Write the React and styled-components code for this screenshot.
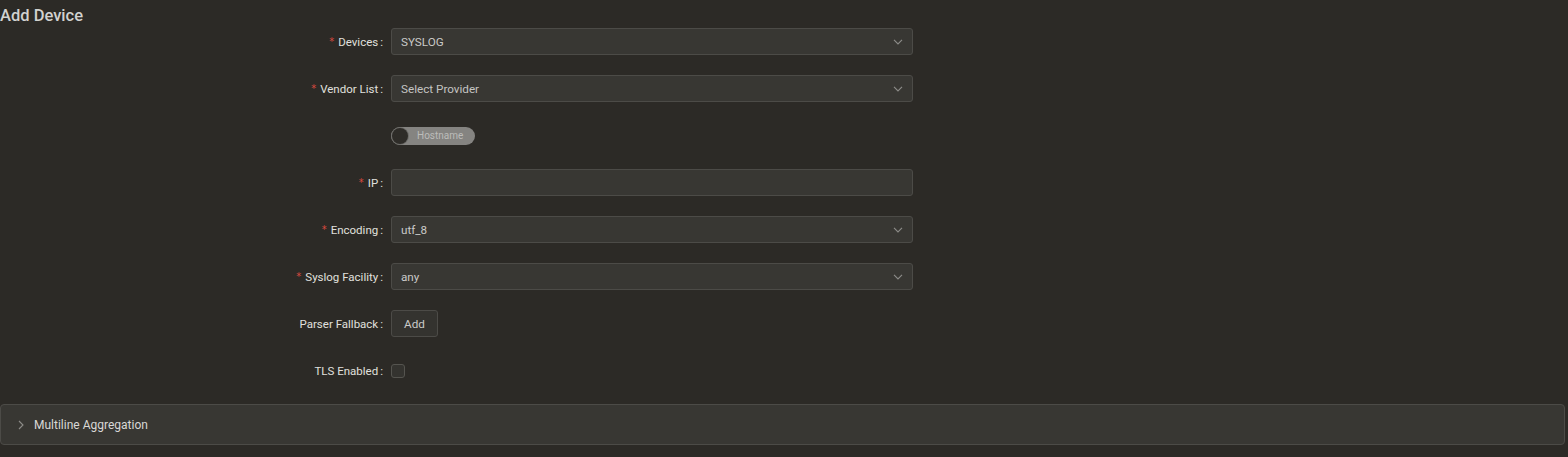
import React, { useState } from "react";
import styled, { createGlobalStyle } from "styled-components";

const GlobalStyle = createGlobalStyle`
  html, body { margin: 0; padding: 0; }
  body {
    background: #2c2a26;
    font-family: Roboto, "Liberation Sans", Arial, sans-serif;
    color: #dedede;
  }
  * { box-sizing: border-box; }
`;

const Page = styled.div`
  width: 1568px;
  min-height: 457px;
  background: #2c2a26;
`;

const Title = styled.h2`
  margin: 0;
  padding-top: 4px;
  height: 28px;
  font-size: 16.5px;
  line-height: 24px;
  font-weight: 500;
  color: #d2d2d0;
`;

const Form = styled.form`
  display: flex;
  flex-direction: column;
  gap: 20px;
`;

const Row = styled.div`
  display: grid;
  grid-template-columns: 391px 522px;
  align-items: center;
  height: 27px;
`;

const Label = styled.label`
  display: flex;
  justify-content: flex-end;
  align-items: center;
  padding-right: 8px;
  font-size: 11.5px;
  color: #e0e0de;
  white-space: nowrap;
  &::after {
    content: ":";
    margin-left: 2px;
  }
`;

const Required = styled.span`
  color: #d9493f;
  font-size: 10px;
  margin-right: 4px;
  font-family: SimSun, "DejaVu Sans", sans-serif;
  line-height: 1;
`;

const SelectBox = styled.div`
  height: 27px;
  display: flex;
  align-items: center;
  justify-content: space-between;
  padding: 0 9px 0 9px;
  background: #383733;
  border: 1px solid #4c4b47;
  border-radius: 3px;
  font-size: 11.7px;
  color: ${(p) => (p.$placeholder ? "#c4c4c2" : "#cacac8")};
`;

const TextInput = styled.input`
  height: 27px;
  width: 100%;
  padding: 0 9px;
  background: #383733;
  border: 1px solid #4c4b47;
  border-radius: 3px;
  font-size: 11.7px;
  font-family: inherit;
  color: #cacac8;
  outline: none;
`;

const SwitchTrack = styled.button`
  position: relative;
  width: 84px;
  height: 18px;
  border: none;
  border-radius: 9px;
  background: #858481;
  padding: 0 0 0 26px;
  display: flex;
  align-items: center;
  font-family: inherit;
  font-size: 10px;
  color: #bcbcba;
  cursor: pointer;
`;

const SwitchHandle = styled.span`
  position: absolute;
  left: 1px;
  top: 1px;
  width: 16px;
  height: 16px;
  border-radius: 50%;
  background: #2e2c28;
  box-shadow: 0 0 0 1px #6e6d6a;
`;

const Button = styled.button`
  width: 47px;
  height: 27px;
  background: #34332f;
  border: 1px solid #4c4b47;
  border-radius: 3px;
  font-family: inherit;
  font-size: 11.7px;
  color: #cacac8;
  padding: 0;
`;

const Checkbox = styled.span`
  display: block;
  width: 14px;
  height: 14px;
  border: 1px solid #55544f;
  border-radius: 3px;
  background: #34332f;
`;

const Collapse = styled.div`
  margin-top: 20px;
  margin-right: 3px;
  height: 41px;
  background: #383733;
  border: 1px solid #4c4b47;
  border-radius: 4px;
  display: flex;
  align-items: center;
  padding: 1px 0 0 16px;
  gap: 9px;
  font-size: 12px;
  color: #d8d8d6;
`;

const Chevron = ({ dir = "down" }) =>
  dir === "down" ? (
    <svg width="10" height="6" viewBox="0 0 10 6" fill="none">
      <path d="M1 0.8 L5 5 L9 0.8" stroke="#8d8c89" strokeWidth="1.1" />
    </svg>
  ) : (
    <svg width="8" height="10" viewBox="0 0 8 10" fill="none">
      <path d="M2 1 L6 5 L2 9" stroke="#8d8c89" strokeWidth="1.1" />
    </svg>
  );

const Select = ({ value, placeholder }) => (
  <SelectBox $placeholder={placeholder}>
    <span>{value}</span>
    <Chevron />
  </SelectBox>
);

const FieldLabel = ({ required, children }) => (
  <Label>
    {required && <Required>*</Required>}
    {children}
  </Label>
);

export default function App() {
  const [ip, setIp] = useState("");
  return (
    <Page>
      <GlobalStyle />
      <Title>Add Device</Title>
      <Form onSubmit={(e) => e.preventDefault()}>
        <Row>
          <FieldLabel required>Devices</FieldLabel>
          <Select value="SYSLOG" />
        </Row>
        <Row>
          <FieldLabel required>Vendor List</FieldLabel>
          <Select value="Select Provider" placeholder />
        </Row>
        <Row>
          <span />
          <div>
            <SwitchTrack type="button">
              <SwitchHandle />
              Hostname
            </SwitchTrack>
          </div>
        </Row>
        <Row>
          <FieldLabel required>IP</FieldLabel>
          <TextInput value={ip} onChange={(e) => setIp(e.target.value)} />
        </Row>
        <Row>
          <FieldLabel required>Encoding</FieldLabel>
          <Select value="utf_8" />
        </Row>
        <Row>
          <FieldLabel required>Syslog Facility</FieldLabel>
          <Select value="any" />
        </Row>
        <Row>
          <FieldLabel>Parser Fallback</FieldLabel>
          <div>
            <Button type="button">Add</Button>
          </div>
        </Row>
        <Row>
          <FieldLabel>TLS Enabled</FieldLabel>
          <div>
            <Checkbox />
          </div>
        </Row>
      </Form>
      <Collapse>
        <Chevron dir="right" />
        <span>Multiline Aggregation</span>
      </Collapse>
    </Page>
  );
}
